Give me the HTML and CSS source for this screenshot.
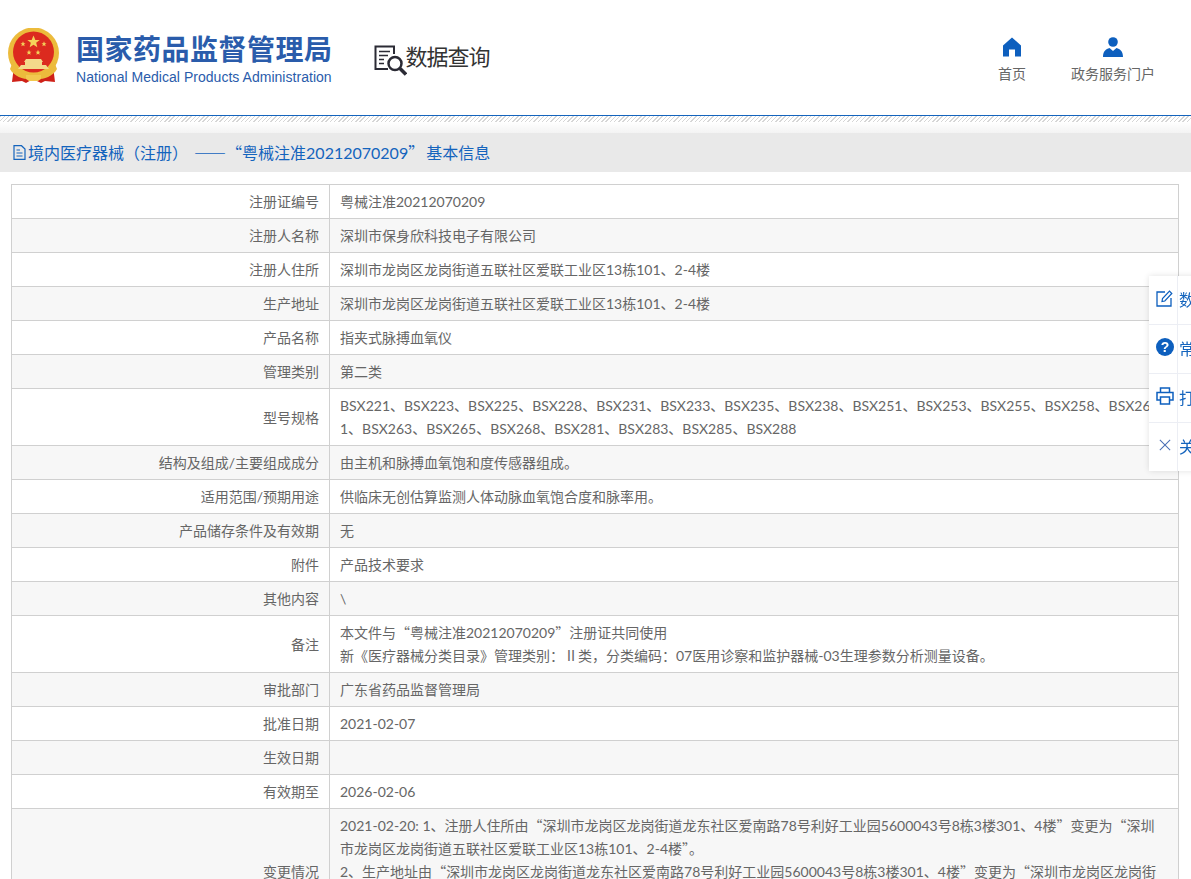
FILE: index.html

```html
<!DOCTYPE html>
<html lang="zh-CN">
<head>
    <meta charset="UTF-8">
    <title>国家药品监督管理局 数据查询</title>
    <link rel="stylesheet" href="styles.css">
</head>
<body>
    <div class="header">
        <div class="logo">
            <svg class="emblem" viewBox="0 0 51 56" width="51" height="56">
                <defs><path id="star" d="M0 -1 L.29 -.31 L.95 -.31 L.41 .12 L.59 .81 L0 .42 L-.59 .81 L-.41 .12 L-.95 -.31 L-.29 -.31 Z"/></defs>
                <path d="M6 38 L4 54 L14 53 L18 55 L25 51 L33 55 L37 53 L47 54 L45 38 Z" fill="#cf2118"/>
                <circle cx="25.500" cy="25" r="25.500" fill="#ecbb3c"/>
                <circle cx="25.500" cy="24" r="20.500" fill="#dc2a1f"/>
                <g fill="#f4d25a">
                    <use href="#star" transform="translate(25.500 14) scale(6.500)"/>
                    <use href="#star" transform="translate(15 16) scale(2.700)"/>
                    <use href="#star" transform="translate(36 16) scale(2.700)"/>
                    <use href="#star" transform="translate(21 24.500) scale(2.700)"/>
                    <use href="#star" transform="translate(30 24.500) scale(2.700)"/>
                </g>
                <path d="M18 31 H33 L35 34 H16 Z M17 34 H34 V37 H38 L41 41 H10 L13 37 H17 Z" fill="#f4d98a"/>
                <path d="M4 36 C8 45 18 47 25.500 47 C33 47 43 45 47 36 L49 41 C44 50 33 52 25.500 51 C18 52 7 50 2 41 Z" fill="#ecbb3c"/>
                <path d="M18 47 h15 v4 l-3 2 h-9 l-3 -2 z" fill="#f2c94f"/>
            </svg>
            <div class="logo_text">
                <div class="logo_cn">国家药品监督管理局</div>
                <div class="logo_en">National Medical Products Administration</div>
            </div>
        </div>
        <div class="query_title">
            <svg viewBox="0 0 33 33" width="33" height="33" fill="none" stroke="#2b2b35" stroke-width="2">
                <path d="M14 24 H1.500 V1.500 H20 V9"/>
                <path d="M5 6.500 H16 M5 10.500 H14 M5 14.500 H10 M5 18.500 H10" stroke-width="1.500"/>
                <circle cx="21" cy="18.500" r="6.500" stroke-width="2.500"/>
                <path d="M26 23.500 L32 29.500" stroke-width="3.500"/>
            </svg>
            <span>数据查询</span>
        </div>
        <ul class="nav">
            <li class="nav_home">
                <svg viewBox="0 0 20 19" width="20" height="19"><path d="M10 0 L19 8 V19 H13 V12 H7 V19 H1 V8 Z" fill="#0d5fbe"/></svg>
                <span>首页</span>
            </li>
            <li class="nav_portal">
                <svg viewBox="0 0 20 20" width="20" height="20"><circle cx="10" cy="5" r="4.800" fill="#0d5fbe"/><path d="M0 20 C0 14 3 12 6.500 11 L10 14 L13.500 11 C17 12 20 14 20 20 Z" fill="#0d5fbe"/></svg>
                <span>政务服务门户</span>
            </li>
        </ul>
    </div>
    <div class="hatch"></div>
    <h2 class="page_title">
        <svg viewBox="0 0 13 15" width="13" height="15" fill="none" stroke="#1464bd" stroke-width="1.200"><path d="M1 .7 H8.500 L12 4 V14.300 H1 Z M3.500 5 H7 M3.500 8 H9.500 M3.500 11 H9.500"/></svg>
        <span>境内医疗器械<em class="paren" lang="zh-Hant">（</em>注册<em class="paren" lang="zh-Hant">）</em><i class="dash">——</i><b class="cjk">“</b>粤械注准20212070209<b class="cjk">”</b>基本信息</span>
    </h2>
    <table class="info_table">
        <tr><th>注册证编号</th><td>粤械注准20212070209</td></tr>
        <tr><th>注册人名称</th><td>深圳市保身欣科技电子有限公司</td></tr>
        <tr><th>注册人住所</th><td>深圳市龙岗区龙岗街道五联社区爱联工业区13栋101、2-4楼</td></tr>
        <tr><th>生产地址</th><td>深圳市龙岗区龙岗街道五联社区爱联工业区13栋101、2-4楼</td></tr>
        <tr><th>产品名称</th><td>指夹式脉搏血氧仪</td></tr>
        <tr><th>管理类别</th><td>第二类</td></tr>
        <tr><th>型号规格</th><td>BSX221、BSX223、BSX225、BSX228、BSX231、BSX233、BSX235、BSX238、BSX251、BSX253、BSX255、BSX258、BSX261、BSX263、BSX265、BSX268、BSX281、BSX283、BSX285、BSX288</td></tr>
        <tr><th>结构及组成/主要组成成分</th><td>由主机和脉搏血氧饱和度传感器组成。</td></tr>
        <tr><th>适用范围/预期用途</th><td>供临床无创估算监测人体动脉血氧饱合度和脉率用。</td></tr>
        <tr><th>产品储存条件及有效期</th><td>无</td></tr>
        <tr><th>附件</th><td>产品技术要求</td></tr>
        <tr><th>其他内容</th><td>\</td></tr>
        <tr><th>备注</th><td>本文件与<b class="cjk">“</b>粤械注准20212070209<b class="cjk">”</b>注册证共同使用<br>新《医疗器械分类目录》管理类别：Ⅱ类，分类编码：07医用诊察和监护器械-03生理参数分析测量设备。</td></tr>
        <tr><th>审批部门</th><td>广东省药品监督管理局</td></tr>
        <tr><th>批准日期</th><td>2021-02-07</td></tr>
        <tr><th>生效日期</th><td></td></tr>
        <tr><th>有效期至</th><td>2026-02-06</td></tr>
        <tr><th>变更情况</th><td>2021-02-20: 1、注册人住所由<b class="cjk">“</b>深圳市龙岗区龙岗街道龙东社区爱南路78号利好工业园5600043号8栋3楼301、4楼<b class="cjk">”</b>变更为<b class="cjk">“</b>深圳市龙岗区龙岗街道五联社区爱联工业区13栋101、2-4楼<b class="cjk">”</b>。<br>2、生产地址由<b class="cjk">“</b>深圳市龙岗区龙岗街道龙东社区爱南路78号利好工业园5600043号8栋3楼301、4楼<b class="cjk">”</b>变更为<b class="cjk">“</b>深圳市龙岗区龙岗街道五联社区爱联工业区13栋101、2-4楼<b class="cjk">”</b>。<br>&nbsp;</td></tr>
    </table>
    <ul class="side_panel">
        <li>
            <span class="side_icon"><svg viewBox="0 0 17 17" width="17" height="17" fill="none" stroke="#0d5fbe" stroke-width="1.300"><path d="M9 2 H1 V16 H15 V8"/><path d="M6 11.500 L6.500 8.500 L13.500 1.200 L15.800 3.500 L8.800 11 Z" stroke-width="1.200"/></svg></span>
            <a>数据查询说明</a>
        </li>
        <li>
            <span class="side_icon"><svg viewBox="0 0 18 18" width="18" height="18"><circle cx="9" cy="9" r="9" fill="#0d5fbe"/><text x="9" y="14" class="q_mark">?</text></svg></span>
            <a>常见问题</a>
        </li>
        <li>
            <span class="side_icon"><svg viewBox="0 0 18 18" width="18" height="18" fill="none" stroke="#0d5fbe" stroke-width="1.500"><path d="M4.500 5 V1 H13.500 V5 M4.500 13 H1 V5.500 H17 V13 H13.500 M4.500 10 H13.500 V17 H4.500 Z"/></svg></span>
            <a>打印</a>
        </li>
        <li>
            <span class="side_icon"><svg viewBox="0 0 14 14" width="12" height="12" fill="none" stroke="#4a6fb5" stroke-width="1.200"><path d="M1 1 L13 13 M13 1 L1 13"/></svg></span>
            <a>关闭</a>
        </li>
    </ul>
</body>
</html>
```

FILE: styles.css

```css
html, body {
    margin: 0;
    padding: 0;
    height: 879px;
    overflow: hidden;
}
body {
    font-family: Lato, "Noto Sans CJK SC", sans-serif;
    font-size: 14px;
    color: #666;
    background: #fff;
}
ul {
    list-style: none;
    margin: 0;
    padding: 0;
}
/* full width quotes, the latin font has only narrow ones */
.cjk {
    font-family: "Noto Sans CJK SC", sans-serif;
    font-weight: 400;
}
/* TC draws the brackets in the middle of their box */
.paren {
    font-family: "Noto Sans CJK TC", sans-serif;
    font-style: normal;
}

.header {
    display: flex;
    align-items: flex-start;
    height: 115px;
    border-bottom: 1px solid #1464bd;
}
.logo {
    display: flex;
    margin: 28px 0 0 8px;
}
.logo_text {
    margin-left: 17px;
}
.logo_cn {
    font-family: "Noto Sans CJK SC", sans-serif;
    font-size: 28px;
    font-weight: 700;
    line-height: 40px;
    letter-spacing: .5px;
    color: #2a5cab;
    white-space: nowrap;
}
.logo_en {
    font-family: "Liberation Sans", sans-serif;
    font-size: 14px;
    line-height: 18px;
    letter-spacing: .03px;
    color: #2a5cab;
    white-space: nowrap;
}
.query_title {
    display: flex;
    align-items: flex-start;
    margin: 45px 0 0 41px;
    color: #333;
}
.query_title span {
    font-family: "Noto Sans CJK SC", sans-serif;
    font-size: 22px;
    line-height: 30px;
    letter-spacing: -1px;
    margin: -5px 0 0 -1px;
    white-space: nowrap;
}
.nav {
    display: flex;
    margin-left: auto;
    padding-top: 37px;
}
.nav li {
    display: flex;
    flex-direction: column;
    align-items: center;
    font-family: "Noto Sans CJK SC", sans-serif;
    font-size: 14px;
    line-height: 18px;
    color: #666;
    white-space: nowrap;
}
.nav svg {
    height: 20px;
    margin-bottom: 7px;
}
.nav_home {
    margin-right: 45px;
}
.nav_portal {
    margin-right: 36px;
}

.hatch {
    height: 6px;
    background: repeating-linear-gradient(135deg, #d6d6d6 0, #d6d6d6 1px, #fff 1px, #fff 3px);
}
.page_title {
    display: flex;
    align-items: center;
    height: 50px;
    box-sizing: border-box;
    margin: 0;
    padding: 11px 0 0 13px;
    background: linear-gradient(#e9e9e9, #e9e9e9) 0 11px / 100% 39px no-repeat, linear-gradient(#fff, #f3f3f3) 0 0 / 100% 11px no-repeat;
    font-weight: 400;
    font-size: 16px;
    line-height: 24px;
    color: #1464bd;
    white-space: nowrap;
}
.page_title span {
    margin-left: 2px;
}
.page_title .dash {
    font-style: normal;
    font-family: "Noto Sans CJK SC", sans-serif;
    margin-left: 6px;
}
.page_title b:last-of-type {
    margin-right: 2px;
}

.info_table {
    width: 1168px;
    margin: 12px 0 0 11px;
    border-collapse: collapse;
    table-layout: fixed;
    line-height: 23px;
}
.info_table th,
.info_table td {
    border: 1px solid #d0d0d0;
    padding: 5px 10px;
    font-weight: 400;
}
.info_table th {
    width: 297px;
    text-align: right;
}
.info_table td {
    text-align: left;
    word-break: break-all;
    height: 23px;
}
.info_table tr:nth-child(even) {
    background: #f7f7f7;
}

.side_panel {
    position: fixed;
    left: 1149px;
    top: 276px;
    width: 100px;
    background: #fff;
    box-shadow: 0 0 6px rgba(0, 0, 0, .12);
}
.side_panel li {
    display: flex;
    align-items: center;
    height: 48px;
    border-bottom: 1px solid #eceef4;
}
.side_panel li:last-child {
    border-bottom: 0;
}
.side_icon {
    display: flex;
    justify-content: center;
    align-items: center;
    flex: none;
    width: 29px;
    height: 100%;
    box-sizing: border-box;
    padding: 0 0 4px 3px;
    border-right: 1px solid #eceef4;
}
.side_panel a {
    margin: -2px 0 0 1px;
    font-family: "Noto Sans CJK SC", sans-serif;
    font-size: 16px;
    color: #1464bd;
    white-space: nowrap;
}
.q_mark {
    font-family: "Liberation Sans", sans-serif;
    font-size: 14px;
    font-weight: 700;
    fill: #fff;
    text-anchor: middle;
}
```
